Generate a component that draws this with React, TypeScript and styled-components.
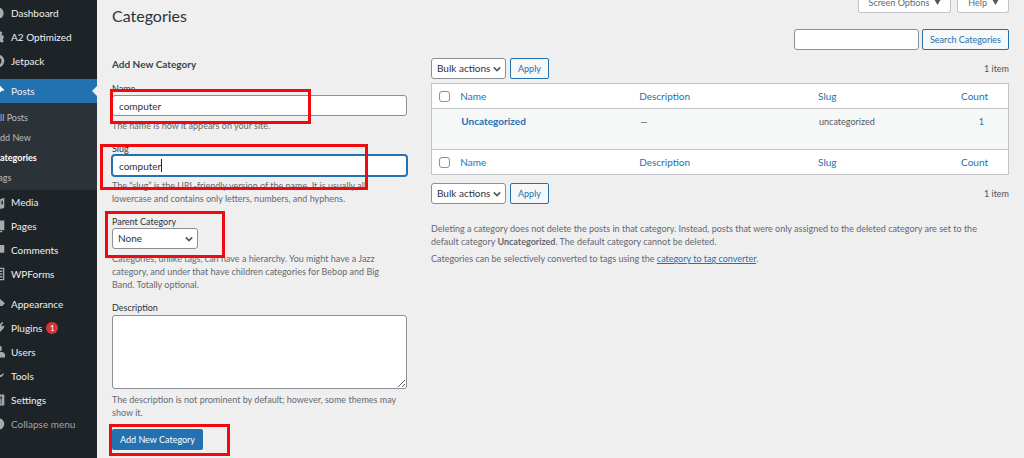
import React from "react";
import styled, { createGlobalStyle, css } from "styled-components";

const GlobalStyle = createGlobalStyle`
  *, *::before, *::after { box-sizing: border-box; }
  body {
    margin: 0;
    background: #efeff0;
    color: #3c434a;
    font-family: Lato, "Open Sans", sans-serif;
    font-size: 9px;
    line-height: 13px;
    overflow-x: hidden;
  }
  h1, h2, p, ul { margin: 0; padding: 0; }
  button, input, select, textarea { font: inherit; color: inherit; margin: 0; }
  a { color: #2271b1; }
`;

const Page = styled.div`
  display: flex;
  min-height: 100vh;
`;

/* ---------- sidebar ---------- */

const Sidebar = styled.nav`
  flex: 0 0 97px;
  background: #1d2327;
  overflow: hidden;
`;

const Menu = styled.ul`
  list-style: none;
  margin: 1px 0 0 -15px;
`;

const MenuItem = styled.li<{ $spaced?: boolean }>`
  margin-top: ${(p) => (p.$spaced ? 6 : 0)}px;
`;

const MenuLink = styled.a<{ $current?: boolean; $muted?: boolean }>`
  position: relative;
  display: flex;
  align-items: center;
  height: 24px;
  font-size: 10px;
  text-decoration: none;
  color: ${(p) => (p.$muted ? "#a0a5aa" : "#f0f0f1")};
  background: ${(p) => (p.$current ? "#2271b1" : "transparent")};
  ${(p) =>
    p.$current &&
    css`
      &::after {
        content: "";
        position: absolute;
        right: 0;
        top: 7px;
        border: 5px solid transparent;
        border-right-color: #efeff0;
        border-left-width: 0;
      }
    `}
`;

const MenuIcon = styled.svg<{ $current?: boolean }>`
  flex: none;
  width: 14px;
  height: 14px;
  margin: 0 6px;
  fill: ${(p) => (p.$current ? "#ffffff" : "#a7aaad")};
`;

const Bubble = styled.span`
  display: inline-flex;
  align-items: center;
  justify-content: center;
  width: 12px;
  height: 12px;
  margin-left: 4px;
  border-radius: 50%;
  background: #d63638;
  color: #fff;
  font-size: 8px;
`;

const SubMenu = styled.ul`
  list-style: none;
  background: #2c3338;
  padding: 4px 0 3px 9px;
`;

const SubLink = styled.a<{ $current?: boolean }>`
  display: flex;
  align-items: center;
  height: 20px;
  text-decoration: none;
  color: ${(p) => (p.$current ? "#ffffff" : "#b9bdc1")};
  font-weight: ${(p) => (p.$current ? 700 : 400)};
`;

/* ---------- main area ---------- */

const Main = styled.main`
  flex: 1;
  min-width: 0;
  padding: 0 15px 8px;
`;

const TopBar = styled.header`
  display: flex;
  justify-content: space-between;
  align-items: flex-start;
  height: 29px;
`;

const Title = styled.h1`
  padding-top: 5px;
  font-size: 16px;
  line-height: 22px;
  font-weight: 400;
  color: #2c3338;
`;

const ScreenLinks = styled.div`
  display: flex;
  gap: 6px;
  margin-top: -8px;
`;

const ScreenButton = styled.button`
  display: flex;
  align-items: center;
  gap: 5px;
  height: 21px;
  padding: 0 9px 0 10px;
  border: 1px solid #c3c4c7;
  border-top: 0;
  border-radius: 0 0 3px 3px;
  background: #fff;
  color: #646970;
  svg { width: 7px; height: 6px; fill: #50575e; }
`;

const SearchForm = styled.form`
  display: flex;
  justify-content: flex-end;
  gap: 3px;
`;

const field = css`
  border: 1px solid #8c8f94;
  border-radius: 3px;
  background: #fff;
  color: #2c3338;
`;

const SearchInput = styled.input`
  ${field}
  width: 125px;
  height: 21px;
  padding: 0 6px;
`;

const OutlineButton = styled.button`
  height: 21px;
  padding: 0 7px;
  border: 1px solid #2271b1;
  border-radius: 2px;
  background: #f6f7f7;
  color: #2271b1;
  white-space: nowrap;
`;

const Columns = styled.div`
  display: grid;
  grid-template-columns: 295fr 578fr;
  gap: 24px;
  margin-top: 7px;
  align-items: start;
`;

const Form = styled.form`
  display: flex;
  flex-direction: column;
  align-items: stretch;
  gap: 10px;
`;

const FormTitle = styled.h2`
  font-size: 10px;
  line-height: 15px;
  font-weight: 700;
  color: #3c434a;
`;

const Field = styled.div`
  position: relative;
  display: flex;
  flex-direction: column;
  align-items: flex-start;
`;

const Label = styled.label`
  color: #2c3338;
`;

const TextInput = styled.input<{ $focused?: boolean }>`
  ${field}
  width: 100%;
  height: 21px;
  padding: 0 6px;
  font-size: 10px;
  outline: none;
  ${(p) =>
    p.$focused &&
    css`
      border-color: #2271b1;
      box-shadow: 0 0 0 1px #2271b1;
    `}
`;

const Caret = styled.span`
  position: absolute;
  left: 49px;
  top: 17px;
  width: 1px;
  height: 13px;
  background: #1d2327;
`;

const TextArea = styled.textarea`
  ${field}
  width: 100%;
  height: 74px;
  margin: 1px 0;
  padding: 4px 6px;
  resize: vertical;
`;

const Help = styled.p`
  margin-top: 3px;
  padding-right: 6px;
  color: #646970;
`;

const SelectWrap = styled.span<{ $wide?: boolean }>`
  display: inline-grid;
  align-items: center;
  width: ${(p) => (p.$wide ? 86 : 75)}px;
  > * { grid-area: 1 / 1; }
  svg {
    justify-self: end;
    width: 8px;
    height: 8px;
    margin-right: 5px;
    pointer-events: none;
    fill: none;
    stroke: #50575e;
    stroke-width: 2;
  }
`;

const Select = styled.select`
  ${field}
  appearance: none;
  width: 100%;
  height: 21px;
  padding: 0 13px 0 5px;
  font-size: 10px;
`;

const PrimaryButton = styled.button`
  height: 21px;
  padding: 0 8px;
  border: 0;
  border-radius: 2px;
  background: #2271b1;
  color: #fff;
  white-space: nowrap;
`;

const Highlight = styled.span<{ $x: number; $y: number; $w: number; $h: number }>`
  position: absolute;
  left: ${(p) => p.$x}px;
  top: ${(p) => p.$y}px;
  width: ${(p) => p.$w}px;
  height: ${(p) => p.$h}px;
  border: 3px solid #f00a0e;
  pointer-events: none;
`;

/* ---------- list table ---------- */

const TableNav = styled.div`
  display: flex;
  align-items: center;
  gap: 4px;
  padding-top: 1px;
`;

const ItemCount = styled.span`
  margin-left: auto;
  color: #50575e;
`;

const Table = styled.table`
  width: 100%;
  margin: 4px 0 7px;
  table-layout: fixed;
  border-collapse: collapse;
  border: 1px solid #c3c4c7;
  background: #fff;
  th, td { padding: 0; text-align: left; font-weight: 400; }
  th { height: 25px; font-size: 10px; }
  th a { text-decoration: none; }
  th:nth-child(1) { width: 5%; }
  th:nth-child(2), th:nth-child(3) { width: 31%; }
  th:nth-child(4) { width: 20%; }
  thead tr { border-bottom: 1px solid #c3c4c7; }
  tfoot tr { border-top: 1px solid #c3c4c7; }
  td { height: 41px; padding: 6px 0 0 1px; vertical-align: top; color: #50575e; }
  tbody tr { background: #f6f7f7; }
  th:last-child { padding-right: 20px; text-align: right; }
  td:last-child { padding-right: 24px; text-align: right; }
  td a { text-decoration: none; }
`;

const RowTitle = styled.a`
  font-size: 10px;
  font-weight: 700;
`;

const Checkbox = styled.input`
  appearance: none;
  display: block;
  width: 11px;
  height: 11px;
  margin-left: 7px;
  border: 1px solid #8c8f94;
  border-radius: 3px;
  background: #fff;
`;

const Notes = styled.div`
  display: flex;
  flex-direction: column;
  gap: 4px;
  margin-top: 18px;
  padding-right: 16px;
  color: #646970;
`;

const icons: Record<string, React.ReactNode> = {
  dashboard: <path d="M10 2a8 8 0 0 0-8 8c0 3 1 5 3 7h10c2-2 3-4 3-7a8 8 0 0 0-8-8zm0 2a1 1 0 1 1 0 2 1 1 0 0 1 0-2zM5 9a1 1 0 1 1 0 2 1 1 0 0 1 0-2zm-1-4-3 8a2 2 0 1 1-2-1z" />,
  gear: <path d="M18 12V8l-2.500-.5-.6-1.400L16.300 4 14 1.700l-2 1.400-1.500-.6L10 0H8l-.5 2.500L6 3.100 4 1.700 1.700 4l1.400 2-.6 1.500L0 8v4l2.500.5.6 1.500-1.400 2L4 18.300l2-1.400 1.500.6L8 20h4l.5-2.500 1.500-.6 2 1.400 2.300-2.300-1.400-2 .6-1.500zM10 13a3 3 0 1 1 0-6 3 3 0 0 1 0 6z" />,
  jetpack: <path fillRule="evenodd" d="M10 1a9 9 0 1 0 0 18 9 9 0 0 0 0-18zm0 4a5 5 0 1 1 0 10 5 5 0 0 1 0-10z" />,
  pin: <path d="M10.400 3 12 1.500l7 7-1.600 1.600-2.200-.4-3.300 3.400.5 2.800-1.600 1.600-3.800-3.800L2 18l4.200-5.200L2.500 9l1.600-1.600 2.800.5 3.400-3.300z" />,
  media: <path d="M2 4h6l1-2h2v10H2zm11 2 6-2v12a3 3 0 1 1-2-2.500V8l-2 .5V17a3 3 0 1 1-2-2.500z" />,
  pages: <path d="M6 2h13v14H6zM3 5h2v12h11v2H3z" />,
  comments: <path d="M3 3h15a1 1 0 0 1 1 1v9a1 1 0 0 1-1 1h-8l-5 4v-4H3a1 1 0 0 1-1-1V4a1 1 0 0 1 1-1z" />,
  forms: <path fillRule="evenodd" d="M2 1h17v18H2zm2 2v14h13V3zm1 2h4v2H5zm5 0h6v2h-6zM5 9h4v2H5zm5 0h6v2h-6zm0 4h6v2h-6z" />,
  brush: <path d="M10 3h3l7 6-4 4h-3v-3L8 7zM7 8l6 6-2 1-5 3a2 2 0 0 1-3-3z" />,
  plug: <path d="M13.100 4.400 16 1.500 17.500 3l-2.900 2.900 1.900 1.900L19 6l-.6 4-5.600 5.600a4 4 0 0 1-5 .5L4 19l-2-2 3-3.500a4 4 0 0 1 .5-5L11 3z" />,
  user: <path d="M12 9a3.500 4 0 1 0 0-8 3.500 4 0 0 0 0 8zm-4 1h7c3 0 5 2 5 4v4H3v-4c0-2 1-4 5-4z" />,
  wrench: <path d="M16.700 9.800a5 5 0 0 1-6 1.200L5 17a2 2 0 0 1-3-3l6-5.700a5 5 0 0 1 6-6.500L11 5l.5 3 3 .5L18 5.500a5 5 0 0 1-1.300 4.300z" />,
  settings: <path fillRule="evenodd" d="M3 2h15a1 1 0 0 1 1 1v14a1 1 0 0 1-1 1H3a1 1 0 0 1-1-1V3a1 1 0 0 1 1-1zm3 2v5H5v2h1v5h1v-5h1V9H7V4zm8 0v2h-1v2h1v8h1V8h1V6h-1V4z" />,
  collapse: <path fillRule="evenodd" d="M11 2a8 8 0 1 0 0 16 8 8 0 0 0 0-16zm1 3v10l-6-5z" />,
};

type Entry = {
  label: string;
  icon: string;
  spaced?: boolean;
  current?: boolean;
  muted?: boolean;
  count?: number;
  children?: string[];
};

const entries: Entry[] = [
  { label: "Dashboard", icon: "dashboard" },
  { label: "A2 Optimized", icon: "gear" },
  { label: "Jetpack", icon: "jetpack" },
  {
    label: "Posts",
    icon: "pin",
    spaced: true,
    current: true,
    children: ["All Posts", "Add New", "Categories", "Tags"],
  },
  { label: "Media", icon: "media" },
  { label: "Pages", icon: "pages" },
  { label: "Comments", icon: "comments" },
  { label: "WPForms", icon: "forms" },
  { label: "Appearance", icon: "brush", spaced: true },
  { label: "Plugins", icon: "plug", count: 1 },
  { label: "Users", icon: "user" },
  { label: "Tools", icon: "wrench" },
  { label: "Settings", icon: "settings" },
  { label: "Collapse menu", icon: "collapse", muted: true },
];

const Chevron = () => (
  <svg viewBox="0 0 10 10" aria-hidden="true">
    <path d="M1 3l4 4 4-4" />
  </svg>
);

const Triangle = () => (
  <svg viewBox="0 0 7 6" aria-hidden="true">
    <path d="M0 0h7L3.500 6z" />
  </svg>
);

function BulkActions({ id }: { id: string }) {
  return (
    <TableNav>
      <SelectWrap>
        <Select id={id} aria-label="Bulk actions">
          <option>Bulk actions</option>
        </Select>
        <Chevron />
      </SelectWrap>
      <OutlineButton type="button">Apply</OutlineButton>
      <ItemCount>1 item</ItemCount>
    </TableNav>
  );
}

function HeadingRow() {
  return (
    <tr>
      <th>
        <Checkbox type="checkbox" aria-label="Select all" />
      </th>
      <th><a href="#name">Name</a></th>
      <th><a href="#description">Description</a></th>
      <th><a href="#slug">Slug</a></th>
      <th><a href="#count">Count</a></th>
    </tr>
  );
}

export default function App() {
  return (
    <Page>
      <GlobalStyle />
      <Sidebar>
        <Menu>
          {entries.map((e) => (
            <MenuItem key={e.label} $spaced={e.spaced}>
              <MenuLink href="#" $current={e.current} $muted={e.muted}>
                <MenuIcon viewBox="0 0 20 20" $current={e.current} aria-hidden="true">
                  {icons[e.icon]}
                </MenuIcon>
                {e.label}
                {e.count && <Bubble>{e.count}</Bubble>}
              </MenuLink>
              {e.children && (
                <SubMenu>
                  {e.children.map((c) => (
                    <li key={c}>
                      <SubLink href="#" $current={c === "Categories"}>{c}</SubLink>
                    </li>
                  ))}
                </SubMenu>
              )}
            </MenuItem>
          ))}
        </Menu>
      </Sidebar>
      <Main>
        <TopBar>
          <Title>Categories</Title>
          <ScreenLinks>
            <ScreenButton type="button">Screen Options <Triangle /></ScreenButton>
            <ScreenButton type="button">Help <Triangle /></ScreenButton>
          </ScreenLinks>
        </TopBar>
        <SearchForm>
          <SearchInput type="text" aria-label="Search Categories" />
          <OutlineButton type="button">Search Categories</OutlineButton>
        </SearchForm>
        <Columns>
          <Form>
            <FormTitle>Add New Category</FormTitle>
            <Field>
              <Label htmlFor="tag-name">Name</Label>
              <TextInput id="tag-name" type="text" defaultValue="computer" />
              <Help>The name is how it appears on your site.</Help>
              <Highlight $x={-2} $y={7} $w={201} $h={35} />
            </Field>
            <Field>
              <Label htmlFor="tag-slug">Slug</Label>
              <TextInput id="tag-slug" type="text" defaultValue="computer" $focused />
              <Caret />
              <Help>
                The “slug” is the URL-friendly version of the name. It is usually all
                lowercase and contains only letters, numbers, and hyphens.
              </Help>
              <Highlight $x={-12} $y={2} $w={268} $h={46} />
            </Field>
            <Field>
              <Label htmlFor="parent">Parent Category</Label>
              <SelectWrap $wide>
                <Select id="parent">
                  <option>None</option>
                </Select>
                <Chevron />
              </SelectWrap>
              <Help>
                Categories, unlike tags, can have a hierarchy. You might have a Jazz
                category, and under that have children categories for Bebop and Big
                Band. Totally optional.
              </Help>
              <Highlight $x={-7} $y={-4} $w={120} $h={47} />
            </Field>
            <Field>
              <Label htmlFor="tag-description">Description</Label>
              <TextArea id="tag-description" />
              <Help>
                The description is not prominent by default; however, some themes may
                show it.
              </Help>
            </Field>
            <Field>
              <PrimaryButton type="button">Add New Category</PrimaryButton>
              <Highlight $x={-3} $y={-5} $w={121} $h={32} />
            </Field>
          </Form>
          <section>
            <BulkActions id="bulk-top" />
            <Table>
              <thead><HeadingRow /></thead>
              <tbody>
                <tr>
                  <td />
                  <td><RowTitle href="#edit">Uncategorized</RowTitle></td>
                  <td>—</td>
                  <td>uncategorized</td>
                  <td><a href="#posts">1</a></td>
                </tr>
              </tbody>
              <tfoot><HeadingRow /></tfoot>
            </Table>
            <BulkActions id="bulk-bottom" />
            <Notes>
              <p>
                Deleting a category does not delete the posts in that category. Instead, posts that
                were only assigned to the deleted category are set to the default category{" "}
                <strong>Uncategorized</strong>. The default category cannot be deleted.
              </p>
              <p>
                Categories can be selectively converted to tags using the{" "}
                <a href="#converter">category to tag converter</a>.
              </p>
            </Notes>
          </section>
        </Columns>
      </Main>
    </Page>
  );
}
